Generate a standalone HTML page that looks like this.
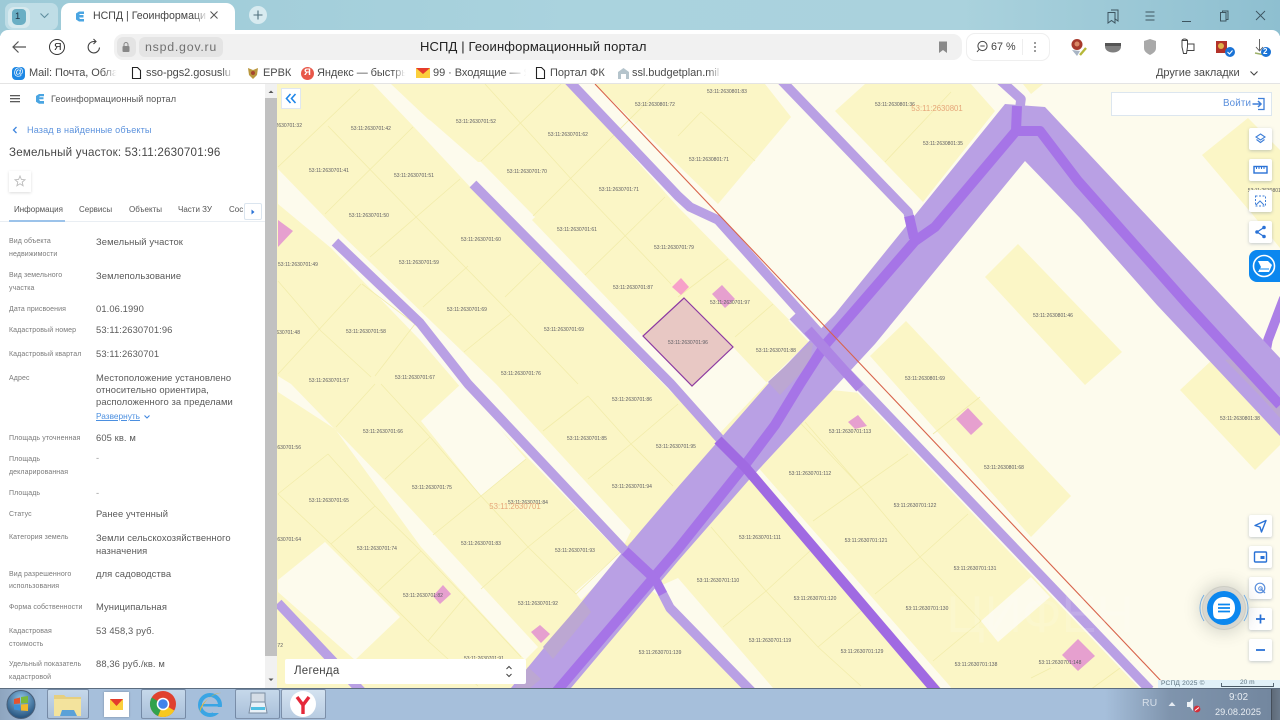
<!DOCTYPE html>
<html lang="ru"><head><meta charset="utf-8"><title>НСПД | Геоинформационный портал</title>
<style>
html,body{margin:0;padding:0;width:1280px;height:720px;overflow:hidden;background:#fff;font-family:"Liberation Sans","DejaVu Sans",sans-serif}
#r{position:relative;width:1280px;height:720px;overflow:hidden}
.t{position:absolute;white-space:nowrap;line-height:12px}
.a{position:absolute}
.l{font-size:7px;color:#7a7a7a;left:9px;letter-spacing:.1px}
.v{font-size:9.4px;color:#5a5a5a;left:96px;letter-spacing:.1px}
.b{font-size:11px;color:#4a4a4a;letter-spacing:-.05px}
.tb{font-size:8px;color:#555;top:204px}
.f{position:absolute;background:linear-gradient(90deg,rgba(255,255,255,0),#fff 75%);width:18px;height:16px;top:65px}
.mb{position:absolute;left:1249px;width:23px;height:22px;background:#fff;box-shadow:0 1px 3px rgba(90,110,140,.35);border-radius:2px}
.mb svg{position:absolute;left:0;top:0}
.task{position:absolute;top:689px;height:30px;border:1px solid rgba(70,90,120,.55);border-radius:2px;background:linear-gradient(#c6d8ea,#a9c0da);box-sizing:border-box}
svg text{font-family:"Liberation Sans",sans-serif}
</style></head><body><div id="r">

<!-- MAP -->
<svg class="a" style="left:0;top:0" width="1280" height="720" viewBox="0 0 1280 720">
<rect x="277" y="84" width="1003" height="604" fill="#fdfbed"/>
<g fill="#fbf6c6">
<polygon points="277,84 568,84 678,207 810,341 766,383 860,393 1148,688 277,688"/>
<polygon points="595,84 765,84 791,117 718,204"/>
<polygon points="835,111 865,84 971,84 995,111 923,202"/>
<polygon points="1023,84 1043,84 1031,94"/>
<polygon points="1018,244 985,277 1085,385 1122,352"/>
<polygon points="906,321 870,356 1031,537 1071,496"/>
<polygon points="1180,390 1228,345 1280,395 1280,445 1255,470"/>
<polygon points="1202,155 1248,118 1280,150 1280,248 1253,215"/>
</g>
<g fill="#fdfbed">
<polygon points="278,169 341,234 496,384 631,531 620,553 468,396 420,340 331,248 278,204"/>
<polygon points="373,84 391,84 428,119 431,121 478,162 481,162 535,217 532,220 643,336 692,387 733,347 767,383 720,433 671,392 473,190 415,128"/>
<polygon points="278,376 291,384 385,481 538,647 525,660 421,547 335,429 278,392"/>
<polygon points="421,421 461,384 526,459 481,496"/>
<polygon points="278,580 325,542 400,617 355,660 278,592"/>
<polygon points="575,592 620,553 625,556 581,600"/>
<polygon points="651,590 678,578 773,688 748,688 678,611"/>
<polygon points="1031,577 1050,597 998,642 981,621"/>
<polygon points="855,384 883,384 1161,688 1140,688"/>
</g>
<g stroke="#f2ecab" stroke-width=".8" fill="none">
<path d="M278,167L360,89M325,214L413,127M370,257L460,179M423,307L468,266M505,297L541,262M481,161L561,84M533,216L665,84M585,275L665,197M464,352L511,314M278,374L361,284M375,376L415,324"/>
<path d="M328,126L418,219L511,314L578,384M485,84L573,181L671,284M278,281L321,331L371,377M362,284L415,324M678,136L701,112L755,161M735,337L773,304M728,259L678,297"/>
<path d="M336,427L375,384M385,479L430,437M433,535L481,496L526,459M481,589L528,547L575,509M576,594L631,542M631,444L588,479M631,444L678,404M543,431L588,396M278,494L328,454M331,544L375,506M378,591L421,551M428,641L465,597"/>
<path d="M381,384L430,437L481,496L528,547L576,594M588,396L631,444L673,486M328,454L375,506L421,551L465,597L521,657M278,494L331,544L378,591L428,641L478,686"/>
<path d="M805,422L861,487L920,557L981,621M711,527L766,591L818,647L861,686M813,521L861,487L908,454M875,594L920,557L968,514M765,592L810,551M723,627L766,591M818,647L861,611M933,661L981,621M1031,678L1051,668M885,162L951,92M933,434L980,397M860,486L770,391M1131,660L1090,690"/>
</g>
<!-- pink -->
<g fill="#e6a0cf">
<polygon points="278,220 293,231 278,247"/>
<polygon points="722,285 735,299 725,308 712,294"/>
<polygon points="858,415 867,426 855,429 848,422"/>
<polygon points="968,408 983,424 971,435 956,419"/>
<polygon points="1078,639 1095,656 1078,671 1062,655"/>
<polygon points="443,585 451,594 440,604 433,596"/>
<polygon points="540,625 550,634 541,643 531,632"/>
</g>
<polygon points="681,278 689,287 681,295 672,287" fill="#f7a1c9"/>
<!-- parcel -->
<polygon points="684,298 733,347 692,386 643,336" fill="#e8c8c4" stroke="#8d3aa2" stroke-width="1.2"/>
<!-- strips -->
<g fill="none" stroke-linejoin="round">
<path d="M793,316L1150,690" stroke="#fdfbed" stroke-width="13"/>
<path d="M755,470L948,690" stroke="#fdfbed" stroke-width="8"/>
<g stroke="#b9a0e4" stroke-width="9.5">
<path d="M568,80L678,196L690,207L718,220L830,345"/>
<path d="M793,316L1150,690"/>
<path d="M781,80L908,212L914,238"/>
<path d="M473,184L671,384L745,467"/>
<path d="M335,242L420,323L468,384L625,551L655,579L670,608L752,692"/>
<path d="M278,603L362,692"/>
<path d="M1000,80L1021,99L1017,131"/>
<path d="M1284,298L1268,340L1262,372" stroke="#ac80e6"/>
</g>
</g>
<!-- main band -->
<polygon points="1005,104 1045,107 1280,358 1280,436 1157,305 1080,218 1025,161 875,344 838,384 748,481 678,561 571,688 511,688 621,554 678,487 768,384 835,314" fill="#b9a0e4"/>
<g fill="#bca7d2">
<polygon points="813,343 810,363 780,395 768,382 810,343"/>
<polygon points="583,601 591,612 553,659 543,647"/>
<polygon points="528,667 541,679 530,688 515,688"/>
<polygon points="1225,360 1240,358 1280,402 1280,418 1262,398"/>
</g>
<g fill="none" stroke-linejoin="round">
<path d="M1017,106L1016,131L1040,131L1078,181L1188,305L1280,405" stroke="#a674e7" stroke-width="10"/>
<path d="M1016,131L935,227L915,241L825,345L800,384L775,425L745,465L678,549L556,692" stroke="#a674e7" stroke-width="10"/>
<path d="M909,216L914,238" stroke="#a674e7" stroke-width="10"/>
<path d="M718,440L745,467L937,692" stroke="#a06ae2" stroke-width="10"/>
<path d="M625,551L655,579" stroke="#a674e7" stroke-width="10"/>
<path d="M808,330L860,388" stroke="#ad85e4" stroke-width="10"/>
<path d="M655,579L663,594" stroke="#a674e7" stroke-width="9"/>
</g>
<line x1="595" y1="84" x2="1162" y2="682" stroke="#d8634b" stroke-width="1.1"/>
<!-- labels -->
<g font-size="5" fill="#5c5c62" text-anchor="middle">
<text x="655" y="106">53:11:2630801:72</text><text x="727" y="93">53:11:2630801:83</text><text x="895" y="106">53:11:2630801:36</text><text x="943" y="145">53:11:2630801:35</text><text x="709" y="161">53:11:2630801:71</text>
<text x="371" y="130">53:11:2630701:42</text><text x="476" y="123">53:11:2630701:52</text><text x="568" y="136">53:11:2630701:62</text><text x="329" y="172">53:11:2630701:41</text><text x="414" y="177">53:11:2630701:51</text><text x="527" y="173">53:11:2630701:70</text><text x="619" y="191">53:11:2630701:71</text><text x="369" y="217">53:11:2630701:50</text><text x="577" y="231">53:11:2630701:61</text><text x="481" y="241">53:11:2630701:60</text><text x="419" y="264">53:11:2630701:59</text><text x="298" y="266">53:11:2630701:49</text><text x="674" y="249">53:11:2630701:79</text><text x="633" y="289">53:11:2630701:87</text><text x="467" y="311">53:11:2630701:69</text><text x="730" y="304">53:11:2630701:97</text><text x="366" y="333">53:11:2630701:58</text><text x="564" y="331">53:11:2630701:69</text><text x="688" y="344">53:11:2630701:96</text><text x="776" y="352">53:11:2630701:88</text><text x="521" y="375">53:11:2630701:76</text><text x="415" y="379">53:11:2630701:67</text><text x="329" y="382">53:11:2630701:57</text><text x="632" y="401">53:11:2630701:86</text><text x="383" y="433">53:11:2630701:66</text><text x="587" y="440">53:11:2630701:85</text><text x="676" y="448">53:11:2630701:95</text><text x="329" y="502">53:11:2630701:65</text><text x="432" y="489">53:11:2630701:75</text><text x="528" y="504">53:11:2630701:84</text><text x="632" y="488">53:11:2630701:94</text><text x="377" y="550">53:11:2630701:74</text><text x="481" y="545">53:11:2630701:83</text><text x="575" y="552">53:11:2630701:93</text><text x="423" y="597">53:11:2630701:82</text><text x="538" y="605">53:11:2630701:92</text><text x="484" y="660">53:11:2630701:91</text>
<text x="718" y="582">53:11:2630701:110</text><text x="760" y="539">53:11:2630701:111</text><text x="810" y="475">53:11:2630701:112</text><text x="850" y="433">53:11:2630701:113</text><text x="915" y="507">53:11:2630701:122</text><text x="866" y="542">53:11:2630701:121</text><text x="975" y="570">53:11:2630701:131</text><text x="815" y="600">53:11:2630701:120</text><text x="927" y="610">53:11:2630701:130</text><text x="770" y="642">53:11:2630701:119</text><text x="862" y="653">53:11:2630701:129</text><text x="660" y="654">53:11:2630701:139</text><text x="976" y="666">53:11:2630701:138</text><text x="1060" y="664">53:11:2630701:148</text>
<text x="1053" y="317">53:11:2630801:46</text><text x="925" y="380">53:11:2630801:69</text><text x="1004" y="469">53:11:2630801:68</text><text x="1240" y="420">53:11:2630801:38</text>
<text x="1265" y="192">53:11:2630801:</text>
</g>
<g font-size="5" fill="#5c5c62" text-anchor="end">
<text x="302" y="127">53:11:2630701:32</text><text x="300" y="334">53:11:2630701:48</text><text x="301" y="449">53:11:2630701:56</text><text x="301" y="541">53:11:2630701:64</text><text x="283" y="647">53:11:2630701:72</text>
</g>
<text x="937" y="111" font-size="7.8" fill="#e6a679" text-anchor="middle">53:11:2630801</text>
<text x="515" y="509" font-size="7.8" fill="#e6a679" text-anchor="middle">53:11:2630701</text>
<text x="1040" y="632" font-size="52" fill="#fff" fill-opacity=".12" text-anchor="middle">ЦИФЕН</text>
</svg>

<!-- Collapse btn -->
<div class="a" style="left:281px;top:88px;width:20px;height:21px;background:#fff;border:1px solid #dfe7f0;box-sizing:border-box"></div>
<svg class="a" style="left:281px;top:88px" width="20" height="21"><path d="M9.5 6L5.5 10.5L9.5 15M14.5 6L10.5 10.5L14.5 15" fill="none" stroke="#1f86e8" stroke-width="1.6"/></svg>

<!-- Login -->
<div class="a" style="left:1111px;top:92px;width:161px;height:24px;background:#fff;border:1px solid #dce6ef;box-sizing:border-box"></div>
<div class="t" style="left:1223px;top:98px;font-size:9.8px;color:#5a8fdc;letter-spacing:.15px">Войти</div>
<svg class="a" style="left:1251px;top:96px" width="16" height="16"><path d="M7 2.5H13V13.5H7" fill="none" stroke="#3f7fd8" stroke-width="1.3"/><path d="M1.5 8H9.5M7 5L10 8L7 11" fill="none" stroke="#3f7fd8" stroke-width="1.5"/></svg>

<!-- Map buttons -->
<div class="mb" style="top:128px"><svg width="23" height="22"><path d="M11.5 6L16 9L11.5 12L7 9Z M7.5 11.5L11.5 14.5L15.5 11.5" fill="none" stroke="#3f7fd8" stroke-width="1.1"/></svg></div>
<div class="mb" style="top:159px"><svg width="23" height="22"><rect x="5" y="7.5" width="13" height="6.5" fill="none" stroke="#2a72d6" stroke-width="1.4"/><path d="M7.5 8V10M10 8V10M12.5 8V10M15 8V10" stroke="#2a72d6"/></svg></div>
<div class="mb" style="top:190px"><svg width="23" height="22"><rect x="6.5" y="6" width="10" height="10" fill="none" stroke="#3f7fd8" stroke-dasharray="2 1.5"/><path d="M7 15L11 11L15 15" fill="none" stroke="#3f7fd8"/></svg></div>
<div class="mb" style="top:221px"><svg width="23" height="22"><path d="M15 6.5L8 11L15 15.5" fill="none" stroke="#2a72d6" stroke-width="1.2"/><circle cx="15" cy="6.5" r="1.8" fill="#2a72d6"/><circle cx="8" cy="11" r="1.8" fill="#2a72d6"/><circle cx="15" cy="15.5" r="1.8" fill="#2a72d6"/></svg></div>
<div class="a" style="left:1249px;top:250px;width:32px;height:32px;background:#0b87ef;border-radius:8px 0 0 8px"></div>
<svg class="a" style="left:1249px;top:250px" width="31" height="32"><circle cx="15" cy="16" r="10.5" fill="none" stroke="#fff" stroke-width="1.6"/><path d="M9 11H19L23 15L20 22H9L12 17Z" fill="#fff"/><path d="M11 19H20" stroke="#0b87ef"/></svg>

<div class="mb" style="top:515px"><svg width="23" height="22"><path d="M17 5.5L6 10.5L11 12L12.5 17Z" fill="none" stroke="#2a72d6" stroke-width="1.4" stroke-linejoin="round"/></svg></div>
<div class="mb" style="top:546px"><svg width="23" height="22"><rect x="5.5" y="6" width="12" height="10" rx="1" fill="none" stroke="#2a72d6" stroke-width="1.4"/><rect x="11.5" y="10" width="4" height="3" fill="#2a72d6"/></svg></div>
<div class="mb" style="top:577px"><svg width="23" height="22"><circle cx="11" cy="11" r="4.8" fill="none" stroke="#5a8fdc" stroke-width="1.2"/><circle cx="11.5" cy="11.5" r="1.8" fill="none" stroke="#5a8fdc"/><path d="M11.5 11.5L16 16" stroke="#5a8fdc" stroke-width="1.3"/></svg></div>
<div class="mb" style="top:608px"><svg width="23" height="22"><path d="M11.5 6.5V15.5M7 11H16" stroke="#2a72d6" stroke-width="1.7"/></svg></div>
<div class="mb" style="top:639px"><svg width="23" height="22"><path d="M7 11H16" stroke="#2a72d6" stroke-width="1.8"/></svg></div>

<!-- Chat -->
<div class="a" style="left:1207px;top:591px;width:34px;height:34px;border-radius:50%;background:#0b87ef;box-shadow:0 0 0 4px rgba(255,255,255,.25),0 0 0 5px rgba(150,150,150,.3),0 0 16px 8px rgba(60,70,70,.2)"></div>
<svg class="a" style="left:1198px;top:582px" width="52" height="52"><path d="M6 13A23 23 0 0 0 6 39M46 13A23 23 0 0 1 46 39" fill="none" stroke="#6aa9e6" stroke-width=".9"/><path d="M26 15C34 15 37 20 37 26C37 32 33 37 26 37C23 37 18 38 16 35C15 33 15 30 15 26C15 20 19 15 26 15Z" fill="#fff"/><path d="M20 22.5H32M20 26H32M20 29.5H32" stroke="#0b87ef" stroke-width="1.7"/></svg>

<!-- Legend -->
<div class="a" style="left:285px;top:659px;width:241px;height:25px;background:#fff;border-radius:2px"></div>
<div class="t" style="left:294px;top:665px;font-size:11.5px;color:#444;letter-spacing:.25px">Легенда</div>
<svg class="a" style="left:504px;top:664px" width="10" height="15"><path d="M2.5 5L5 2.5L7.5 5M2.5 10L5 12.5L7.5 10" fill="none" stroke="#444" stroke-width="1"/></svg>

<!-- Scale -->
<div class="a" style="left:1158px;top:680px;width:122px;height:8px;background:rgba(222,240,248,.9)"></div>
<div class="t" style="left:1161px;top:678px;font-size:6.6px;color:#5e7480;letter-spacing:.2px">РСПД 2025 ©</div>
<div class="t" style="left:1240px;top:677px;font-size:6.6px;color:#5e7480">20 m</div>
<svg class="a" style="left:1220px;top:680px" width="56" height="8"><path d="M1.5 3V6.5H53.5V3" fill="none" stroke="#4a5a66" stroke-width=".9"/></svg>

<!-- LEFT PANEL -->
<div class="a" style="left:0;top:84px;width:265px;height:604px;background:#fff"></div>
<div class="a" style="left:265px;top:84px;width:12px;height:604px;background:#f1f1f1"></div>
<div class="a" style="left:265px;top:98px;width:12px;height:558px;background:#c1c1c1"></div>
<svg class="a" style="left:265px;top:84px" width="12" height="604"><path d="M3.5 9L6 6.5L8.5 9Z M3.5 594.5H8.5L6 597Z" fill="#555"/></svg>
<svg class="a" style="left:9px;top:93px" width="12" height="12"><path d="M1 2.7H11M1 5.7H11M1 8.7H11" stroke="#444" stroke-width="1.2"/></svg>
<svg class="a" style="left:34px;top:93px" width="11" height="12"><path d="M2 3L5 1H10V3.3H6L5 4.3H9.5V6.3H5L6 8H10V10.8H5L2 8.8Z" fill="#4aa5e2"/></svg>
<div class="t" style="left:51px;top:93px;font-size:9.1px;color:#555;letter-spacing:.12px">Геоинформационный портал</div>
<svg class="a" style="left:11px;top:125px" width="8" height="10"><path d="M5.5 2L2.5 5L5.5 8" fill="none" stroke="#3f86de" stroke-width="1.3"/></svg>
<div class="t" style="left:27px;top:124px;font-size:9.1px;color:#5d93dd;letter-spacing:.14px">Назад в найденные объекты</div>
<div class="t" style="left:9px;top:147px;font-size:11.6px;color:#484848;letter-spacing:.2px">Земельный участок: 53:11:2630701:96</div>
<div class="a" style="left:9px;top:171px;width:22px;height:21px;background:#fff;box-shadow:0 1px 3px rgba(0,0,0,.14)"></div>
<svg class="a" style="left:14px;top:175px" width="12" height="12"><path d="M6 1L7.4 4.5L11 4.8L8.2 7.1L9.1 10.8L6 8.8L2.9 10.8L3.8 7.1L1 4.8L4.6 4.5Z" fill="none" stroke="#bbb" stroke-width=".9"/></svg>
<div class="t tb" style="left:14px">Информация</div>
<div class="t tb" style="left:79px">Сервисы</div>
<div class="t tb" style="left:129px">Объекты</div>
<div class="t tb" style="left:178px">Части ЗУ</div>
<div class="t tb" style="left:229px">Сос</div>
<div class="a" style="left:0;top:221px;width:265px;height:1px;background:#e9eef3"></div>
<div class="a" style="left:9px;top:220px;width:56px;height:2px;background:#9cc3ea"></div>
<div class="a" style="left:244px;top:203px;width:18px;height:17px;background:#fff;border:1px solid #dbe5ef;border-radius:2px;box-sizing:border-box"></div>
<svg class="a" style="left:250px;top:208px" width="6" height="8"><path d="M1.5 1.5L4.5 4L1.5 6.5Z" fill="#2a72d6"/></svg>

<div class="t l" style="top:236px">Вид объекта</div><div class="t l" style="top:249px">недвижимости</div>
<div class="t l" style="top:270px">Вид земельного</div><div class="t l" style="top:283px">участка</div>
<div class="t l" style="top:304px">Дата присвоения</div>
<div class="t l" style="top:325px">Кадастровый номер</div>
<div class="t l" style="top:349px">Кадастровый квартал</div>
<div class="t l" style="top:373px">Адрес</div>
<div class="t l" style="top:433px">Площадь уточненная</div>
<div class="t l" style="top:454px">Площадь</div><div class="t l" style="top:467px">декларированная</div>
<div class="t l" style="top:488px">Площадь</div>
<div class="t l" style="top:509px">Статус</div>
<div class="t l" style="top:532px">Категория земель</div>
<div class="t l" style="top:569px">Вид разрешенного</div><div class="t l" style="top:581px">использования</div>
<div class="t l" style="top:602px">Форма собственности</div>
<div class="t l" style="top:626px">Кадастровая</div><div class="t l" style="top:639px">стоимость</div>
<div class="t l" style="top:659px">Удельный показатель</div><div class="t l" style="top:672px">кадастровой</div>

<div class="t v" style="top:236px">Земельный участок</div>
<div class="t v" style="top:270px">Землепользование</div>
<div class="t v" style="top:303px">01.06.1990</div>
<div class="t v" style="top:324px">53:11:2630701:96</div>
<div class="t v" style="top:348px">53:11:2630701</div>
<div class="t v" style="top:372px">Местоположение установлено</div>
<div class="t v" style="top:384px">относительно ориентира,</div>
<div class="t v" style="top:396px">расположенного за пределами</div>
<div class="t" style="left:96px;top:410px;font-size:8.3px;color:#4b8fe0;text-decoration:underline">Развернуть</div>
<svg class="a" style="left:143px;top:414px" width="8" height="6"><path d="M1.5 1.5L4 4L6.5 1.5" fill="none" stroke="#3f86de" stroke-width="1.1"/></svg>
<div class="t v" style="top:432px">605 кв. м</div>
<div class="t v" style="top:452px;color:#999">-</div>
<div class="t v" style="top:487px;color:#999">-</div>
<div class="t v" style="top:508px">Ранее учтенный</div>
<div class="t v" style="top:532px">Земли сельскохозяйственного</div>
<div class="t v" style="top:545px">назначения</div>
<div class="t v" style="top:568px">для садоводства</div>
<div class="t v" style="top:601px">Муниципальная</div>
<div class="t v" style="top:625px">53 458,3 руб.</div>
<div class="t v" style="top:658px">88,36 руб./кв. м</div>

<!-- BROWSER CHROME -->
<div class="a" style="left:0;top:0;width:1280px;height:36px;background:linear-gradient(90deg,#9dcad7,#aad3de 45%,#aad2dd 75%,#8ebfd0)"></div>
<div class="a" style="left:5px;top:3px;width:53px;height:27px;background:#bfdde6;border-radius:7px"></div>
<div class="a" style="left:8px;top:7px;width:22px;height:21px;background:#d6e9ee;border-radius:6px"></div>
<div class="a" style="left:12px;top:9px;width:14px;height:16px;background:#6aaec4;border-radius:4px 4px 5px 5px"></div>
<div class="t" style="left:15px;top:11px;font-size:9.5px;color:#234">1</div>
<svg class="a" style="left:39px;top:12px" width="11" height="8"><path d="M1.5 1.5L5.5 5.5L9.5 1.5" fill="none" stroke="#5f8d9e" stroke-width="1.1"/></svg>
<div class="a" style="left:61px;top:3px;width:174px;height:30px;background:#fff;border-radius:9px 9px 0 0"></div>
<svg class="a" style="left:74px;top:10px" width="12" height="13"><path d="M2 3.5L5 1.5H10V4H6L5 5H9.5V7.5H5L6 9H10V11.5H5L2 9.5Z" fill="#4aa5e2"/></svg>
<div class="t" style="left:93px;top:10px;font-size:10.6px;color:#444">НСПД | Геоинформаци</div>
<div class="a" style="left:194px;top:8px;width:14px;height:16px;background:linear-gradient(90deg,rgba(255,255,255,0),#fff)"></div>
<svg class="a" style="left:209px;top:10px" width="10" height="10"><path d="M1.5 1.5L8.5 8.5M8.5 1.5L1.5 8.5" stroke="#555" stroke-width="1"/></svg>
<div class="a" style="left:249px;top:6px;width:18px;height:18px;background:#d8ebf0;border-radius:50%"></div>
<svg class="a" style="left:249px;top:6px" width="18" height="18"><path d="M9 4.5V13.5M4.5 9H13.5" stroke="#4f6f7c" stroke-width="1.1"/></svg>
<svg class="a" style="left:1105px;top:7px" width="18" height="18"><path d="M6 3H13V14L9.5 11.5" fill="none" stroke="#3e5560" stroke-width="1"/><path d="M3 5.5H10V16L6.5 13.5L3 16Z" fill="none" stroke="#3e5560" stroke-width="1"/></svg>
<svg class="a" style="left:1143px;top:9px" width="14" height="14"><path d="M2.5 3H11.5M2.5 7H11.5M2.5 11H11.5" stroke="#3e5560"/></svg>
<div class="a" style="left:1182px;top:21px;width:9px;height:1px;background:#3e5560"></div>
<svg class="a" style="left:1217px;top:9px" width="14" height="14"><path d="M5.5 3.5V2H11V10.5H9" fill="none" stroke="#3e5560"/><rect x="3.5" y="3.5" width="5.5" height="8.5" fill="none" stroke="#3e5560"/></svg>
<svg class="a" style="left:1254px;top:9px" width="13" height="13"><path d="M2 2L11 11M11 2L2 11" stroke="#3e5560" stroke-width=".9"/></svg>

<!-- toolbar -->
<div class="a" style="left:0;top:30px;width:1280px;height:54px;background:#fff;border-radius:8px 8px 0 0;box-sizing:border-box;border-bottom:1px solid #e4e4e4"></div>
<div class="a" style="left:61px;top:28px;width:174px;height:6px;background:#fff"></div>
<svg class="a" style="left:10px;top:38px" width="18" height="18"><path d="M16 9H3M8.5 3.5L3 9L8.5 14.5" fill="none" stroke="#555" stroke-width="1.2"/></svg>
<svg class="a" style="left:48px;top:38px" width="18" height="18"><circle cx="9" cy="9" r="7.5" fill="none" stroke="#333" stroke-width="1"/></svg>
<div class="t" style="left:54px;top:41px;font-size:10.5px;color:#222">Я</div>
<svg class="a" style="left:85px;top:38px" width="18" height="18"><path d="M14.5 9.5A5.7 5.7 0 1 1 9 3.5H10.5M8.5 1L11 3.5L8.5 6" fill="none" stroke="#444" stroke-width="1.1"/></svg>
<div class="a" style="left:114px;top:34px;width:848px;height:26px;background:#f1f1f1;border-radius:9px"></div>
<div class="a" style="left:117px;top:37px;width:19px;height:20px;background:#e4e4e4;border-radius:6px"></div>
<svg class="a" style="left:121px;top:41px" width="10" height="12"><path d="M3 5V3.5A2 2 0 0 1 7 3.5V5" fill="none" stroke="#888" stroke-width="1"/><rect x="1.5" y="5" width="7" height="6" rx="1" fill="#888"/></svg>
<div class="a" style="left:139px;top:37px;width:84px;height:20px;background:#e4e4e4;border-radius:6px"></div>
<div class="t" style="left:145px;top:41px;font-size:12.4px;color:#707070;letter-spacing:.75px">nspd.gov.ru</div>
<div class="t" style="left:420px;top:41px;font-size:13px;color:#222;letter-spacing:.14px">НСПД | Геоинформационный портал</div>
<svg class="a" style="left:937px;top:40px" width="12" height="14"><path d="M2 1.5H10V13L6 10L2 13Z" fill="#8a8a8a"/></svg>
<div class="a" style="left:966px;top:33px;width:84px;height:28px;background:#fff;border:1px solid #efefef;border-radius:9px;box-sizing:border-box"></div>
<svg class="a" style="left:975px;top:40px" width="14" height="14"><circle cx="7.5" cy="6" r="4.6" fill="none" stroke="#444"/><path d="M5.3 6H9.7M4 9.5L2 12" stroke="#444"/></svg>
<div class="t" style="left:991px;top:41px;font-size:10.8px;color:#444">67 %</div>
<div class="a" style="left:1022px;top:39px;width:1px;height:16px;background:#eee"></div>
<svg class="a" style="left:1032px;top:40px" width="6" height="14"><circle cx="3" cy="3" r=".9" fill="#555"/><circle cx="3" cy="7" r=".9" fill="#555"/><circle cx="3" cy="11" r=".9" fill="#555"/></svg>
<!-- ext icons -->
<svg class="a" style="left:1068px;top:37px" width="20" height="20"><circle cx="9" cy="7.5" r="5.5" fill="#a73a2c"/><circle cx="9" cy="7" r="2.5" fill="#d98866"/><path d="M4 13L9 19L12 14Z" fill="#a8b4c4"/><path d="M12 18L18 11" stroke="#b6b83a" stroke-width="2.4"/></svg>
<svg class="a" style="left:1104px;top:40px" width="18" height="14"><path d="M1 3H17V6.5C17 10.5 13 12.5 9 12.5C5 12.5 1 10.5 1 6.5Z" fill="#7f7f7f"/><rect x="1" y="3" width="16" height="3" fill="#555"/></svg>
<svg class="a" style="left:1143px;top:38px" width="14" height="18"><path d="M7 1L13 3V10C13 13.5 10 15.5 7 17C4 15.5 1 13.5 1 10V3Z" fill="#a9a9a9"/></svg>
<svg class="a" style="left:1179px;top:38px" width="17" height="18"><path d="M3 2.5H8.5V9L7.5 15.5H4.5L3 9Z M3 2.5C3 2 4 1 5.5 1S8.5 2 8.5 2.5M9 6H15V12.5H8" fill="none" stroke="#444" stroke-width="1"/></svg>
<svg class="a" style="left:1214px;top:38px" width="22" height="20"><rect x="2" y="3" width="11" height="12" fill="#b3322a"/><circle cx="7" cy="8" r="3" fill="#e0b24a"/><circle cx="16" cy="14" r="5" fill="#1a73d6"/><path d="M13.5 14L15.5 16L18.5 12.5" fill="none" stroke="#fff" stroke-width="1.1"/></svg>
<svg class="a" style="left:1252px;top:37px" width="20" height="22"><path d="M7.5 2V13M4 10L7.5 14L11 10" fill="none" stroke="#555" stroke-width=".9"/><path d="M3 16L13 18" stroke="#9db16a" stroke-width="1.5"/><circle cx="14" cy="15" r="5" fill="#1a73d6"/></svg>
<div class="t" style="left:1263px;top:46px;font-size:8px;color:#fff;line-height:12px;font-weight:bold">2</div>

<!-- bookmarks -->
<div class="a" style="left:12px;top:67px;width:13px;height:13px;background:#1e88e5;border-radius:4px"></div>
<div class="t" style="left:13.5px;top:67px;font-size:10px;color:#fff">@</div>
<div class="t b" style="left:29px;top:67px">Mail: Почта, Обла</div><div class="f" style="left:103px"></div>
<svg class="a" style="left:131px;top:66px" width="11" height="14"><path d="M1.5 1.5H6.5L9.5 4.5V12.5H1.5Z" fill="#fff" stroke="#222" stroke-width="1.1"/></svg>
<div class="t b" style="left:146px;top:67px">sso-pgs2.gosuslu</div><div class="f" style="left:221px"></div>
<svg class="a" style="left:246px;top:66px" width="14" height="14"><path d="M2 2L7 4L12 2L11 9L7 13L3 9Z" fill="#b9973e"/><circle cx="7" cy="7" r="2" fill="#a5452f"/></svg>
<div class="t b" style="left:263px;top:67px">ЕРВК</div>
<div class="a" style="left:301px;top:67px;width:13px;height:13px;background:#e8584a;border-radius:50%"></div>
<div class="t" style="left:304px;top:67px;font-size:9.5px;color:#fff;font-weight:bold">Я</div>
<div class="t b" style="left:317px;top:67px">Яндекс — быстры</div><div class="f" style="left:392px"></div>
<svg class="a" style="left:416px;top:67px" width="14" height="12"><rect x="0" y="1" width="14" height="10" fill="#fbcf3c"/><path d="M0 1H14L7 7Z" fill="#e53b2c"/></svg>
<div class="t b" style="left:433px;top:67px">99 · Входящие — Я</div><div class="f" style="left:508px;width:24px"></div>
<svg class="a" style="left:535px;top:66px" width="11" height="14"><path d="M1.5 1.5H6.5L9.5 4.5V12.5H1.5Z" fill="#fff" stroke="#222" stroke-width="1.1"/></svg>
<div class="t b" style="left:550px;top:67px">Портал ФК</div>
<svg class="a" style="left:617px;top:66px" width="13" height="14"><path d="M1 13V6L6.5 2L12 6V13H9V8H4V13Z" fill="#b5c4cc"/></svg>
<div class="t b" style="left:632px;top:67px">ssl.budgetplan.mil</div><div class="f" style="left:708px"></div>
<div class="t b" style="left:1156px;top:67px">Другие закладки</div>
<svg class="a" style="left:1249px;top:70px" width="10" height="7"><path d="M1.5 1.5L5 5L8.5 1.5" fill="none" stroke="#444" stroke-width="1.1"/></svg>

<!-- TASKBAR -->
<div class="a" style="left:0;top:688px;width:1280px;height:32px;background:linear-gradient(90deg,#8ea5bf 0,#a6bfdb 40px,#a6bfdb 1105px,#7f94ad 1170px,#73879f 1270px);border-top:1px solid #5c6d80;box-sizing:border-box"></div>
<div class="a" style="left:1271px;top:689px;width:9px;height:31px;background:linear-gradient(90deg,#5e6a78,#6b7a8b);border-left:1px solid #444e5a;box-sizing:border-box"></div>
<svg class="a" style="left:6px;top:689px" width="30" height="31"><defs><radialGradient id="o" cx=".5" cy=".3" r=".8"><stop offset="0" stop-color="#8fc3e8"/><stop offset="1" stop-color="#123f6b"/></radialGradient></defs><circle cx="15" cy="15.5" r="14" fill="url(#o)" stroke="#4a5f78"/><path d="M8 10L14 8.5V14.5L8 15Z" fill="#e4532f"/><path d="M15 8L22 7V14L15 14.5Z" fill="#7ab93c"/><path d="M8 16L14 15.5V21.5L8 20.5Z" fill="#3a8fd8"/><path d="M15 15.5L22 15V22L15 21.5Z" fill="#f0b82c"/></svg>
<div class="task" style="left:47px;width:42px"></div>
<svg class="a" style="left:52px;top:691px" width="32" height="28"><path d="M2 4H12L14 6H29V25H2Z" fill="#e6cf7f"/><rect x="2" y="8" width="27" height="17" fill="#f3e39d"/><path d="M10 19H22L25 25H8Z" fill="#5ba1d8"/></svg>
<div class="a" style="left:104px;top:692px;width:25px;height:25px;background:#fff;box-shadow:0 0 2px rgba(0,0,0,.3)"></div>
<svg class="a" style="left:110px;top:699px" width="13" height="11"><rect width="13" height="11" fill="#fbcf3c"/><path d="M0 0H13L6.5 7Z" fill="#e53b2c"/></svg>
<div class="task" style="left:141px;width:45px"></div>
<svg class="a" style="left:149px;top:690px" width="28" height="28"><circle cx="14" cy="14" r="13" fill="#e0412f"/><path d="M14 14L25.3 20.5A13 13 0 0 1 9 26Z" fill="#f8c81e"/><path d="M14 14L9 26A13 13 0 0 1 2.7 7.5Z" fill="#31a24c"/><circle cx="14" cy="14" r="6.3" fill="#fff"/><circle cx="14" cy="14" r="4.8" fill="#3f83ea"/></svg>
<svg class="a" style="left:197px;top:690px" width="27" height="28"><ellipse cx="13" cy="15" rx="10" ry="10" fill="none" stroke="#39a5e4" stroke-width="4"/><rect x="6" y="14" width="15" height="2.5" fill="#39a5e4"/><rect x="16" y="17" width="10" height="6" fill="#a6bfdb"/><path d="M3 22C1 15 16 3 24 3C20 2 8 7 3 22Z" fill="#e6b530"/></svg>
<div class="task" style="left:235px;width:45px"></div>
<svg class="a" style="left:246px;top:691px" width="24" height="27"><rect x="5" y="2" width="14" height="9" fill="#d5dde6" stroke="#7c8ea3"/><path d="M5 11H19L21 22H3Z" fill="#e9f1f8" stroke="#7c8ea3"/><rect x="5" y="16" width="14" height="3" fill="#50bfe3"/></svg>
<div class="task" style="left:281px;width:45px;background:linear-gradient(#d4e2f0,#b8cce2)"></div>
<div class="a" style="left:290px;top:691px;width:26px;height:26px;background:#fff;border-radius:50%"></div>
<svg class="a" style="left:290px;top:691px" width="26" height="26"><path d="M7 6L13 14L19 6M13 14V23" fill="none" stroke="#e5283a" stroke-width="3.4"/></svg>
<div class="t" style="left:1142px;top:697px;font-size:10.5px;color:#d6dfe9">RU</div>
<svg class="a" style="left:1167px;top:700px" width="10" height="8"><path d="M1.5 6H8.5L5 2Z" fill="#e6ecf3"/></svg>
<svg class="a" style="left:1186px;top:696px" width="16" height="18"><path d="M1 6H4L7 2V15L4 11H1Z" fill="#eef2f6"/><circle cx="11" cy="13" r="3.4" fill="#d5303a"/><path d="M9 14.5L13 11.5" stroke="#fff"/></svg>
<div class="t" style="left:1229px;top:692px;font-size:9.8px;color:#e8edf3">9:02</div>
<div class="t" style="left:1215px;top:706px;font-size:9.2px;color:#e8edf3">29.08.2025</div>
</div></body></html>
